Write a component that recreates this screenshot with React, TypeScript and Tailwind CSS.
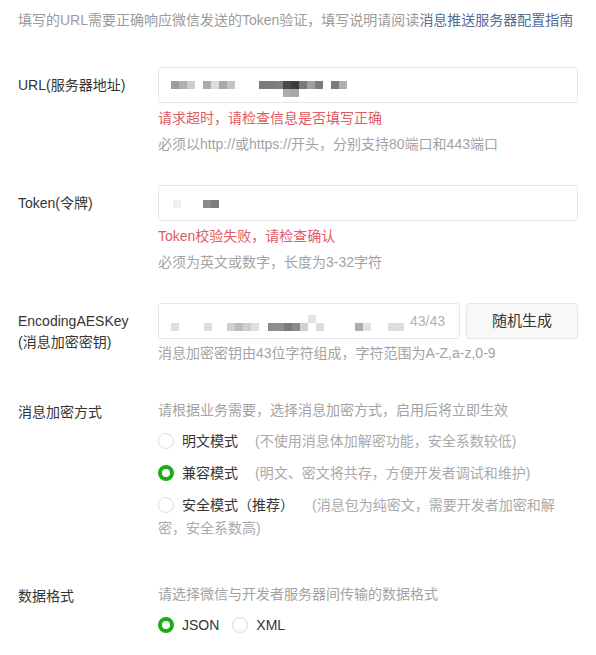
import React from "react";

type Cell = [number, number, string];

const URL_CELLS: Cell[] = [
  [12, 13, "#9c9c9c"], [20, 13, "#b0b0b0"], [28, 13, "#cdcdcd"],
  [44, 13, "#ababab"], [52, 13, "#dcdcdc"], [60, 13, "#a8a8a8"], [68, 13, "#c4c4c4"],
  [100, 13, "#7a7a7a"], [108, 13, "#7c7c7c"], [116, 13, "#808080"], [124, 13, "#4a4a4a"],
  [132, 13, "#3c3c3c"], [140, 13, "#7a7a7a"], [148, 13, "#a0a0a0"], [156, 13, "#7c7c7c"],
  [172, 13, "#7a7a7a"], [180, 13, "#b0b0b0"],
  [124, 21, "#acacac"], [132, 21, "#a8a8a8"],
];

const TOKEN_CELLS: Cell[] = [
  [14, 14, "#f0f0f0"], [44, 14, "#8a8a8a"], [52, 14, "#7c7c7c"],
];

const KEY_CELLS: Cell[] = [
  [12, 19, "#dedede"], [45, 19, "#dedede"],
  [68, 19, "#cfcfcf"], [76, 19, "#bdbdbd"], [84, 19, "#cdcdcd"], [92, 19, "#dedede"],
  [109, 19, "#8c8c8c"], [117, 19, "#8e8e8e"], [125, 19, "#7a7a7a"], [133, 19, "#8a8a8a"],
  [141, 19, "#d0d0d0"], [149, 11, "#e4e4e4"], [157, 19, "#dcdcdc"],
  [196, 19, "#acacac"], [204, 19, "#e2e2e2"], [229, 19, "#dedede"], [237, 19, "#dedede"],
];

function Mosaic({ cells, width }: { cells: Cell[]; width: number }) {
  return (
    <svg width={width} height={34} className="block shrink-0">
      {cells.map(([x, y, c], i) => (
        <rect key={i} x={x} y={y} width={8} height={8} fill={c} />
      ))}
    </svg>
  );
}

function Radio({ checked }: { checked?: boolean }) {
  return checked ? (
    <span className="inline-block align-[-3px] w-4 h-4 rounded-full border-[4px] border-[#1aad19] bg-white mr-2" />
  ) : (
    <span className="inline-block align-[-3px] w-4 h-4 rounded-full border border-[#dcdcdc] bg-white mr-2" />
  );
}

function Label({ children, className = "" }: { children: React.ReactNode; className?: string }) {
  return <div className={`w-[140px] shrink-0 text-[#353535] ${className}`}>{children}</div>;
}

const inputBox = "h-[36px] border border-[#e4e8eb] rounded-[3px] bg-white flex items-center";

export default function App() {
  return (
    <div
      className="w-[596px] h-[655px] overflow-hidden bg-white px-[18px] text-[14px]"
      style={{ fontFamily: '"Liberation Sans", "Noto Sans CJK SC", sans-serif' }}
    >
      <p className="pt-[10px] leading-[20px] text-[#9b9b9b] whitespace-nowrap">
        填写的URL需要正确响应微信发送的Token验证，填写说明请阅读
        <span className="text-[#576b95]">消息推送服务器配置指南</span>
      </p>

      {/* URL */}
      <div className="mt-[37px] flex">
        <Label className="leading-[36px]">URL(服务器地址)</Label>
        <div>
          <div className={`${inputBox} w-[420px]`}>
            <Mosaic cells={URL_CELLS} width={400} />
          </div>
          <p className="mt-[5px] leading-[20px] text-[#e15b66]">请求超时，请检查信息是否填写正确</p>
          <p className="mt-[6px] leading-[20px] text-[#a3a3a3]">必须以http://或https://开头，分别支持80端口和443端口</p>
        </div>
      </div>

      {/* Token */}
      <div className="mt-[31px] flex">
        <Label className="leading-[36px]">Token(令牌)</Label>
        <div>
          <div className={`${inputBox} w-[420px]`}>
            <Mosaic cells={TOKEN_CELLS} width={400} />
          </div>
          <p className="mt-[5px] leading-[20px] text-[#e15b66]">Token校验失败，请检查确认</p>
          <p className="mt-[6px] leading-[20px] text-[#a3a3a3]">必须为英文或数字，长度为3-32字符</p>
        </div>
      </div>

      {/* EncodingAESKey */}
      <div className="mt-[31px] flex">
        <Label className="pt-[8px] leading-[21px]">
          EncodingAESKey
          <br />
          (消息加密密钥)
        </Label>
        <div>
          <div className="flex gap-[6px]">
            <div className={`${inputBox} w-[302px] justify-between pr-[14px]`}>
              <Mosaic cells={KEY_CELLS} width={250} />
              <span className="text-[#b2b2b2]">43/43</span>
            </div>
            <button className="h-[36px] w-[112px] border border-[#e4e8eb] rounded-[3px] bg-[#f8f8f8] text-[15px] text-[#353535]">
              随机生成
            </button>
          </div>
          <p className="mt-[4px] leading-[20px] text-[#a3a3a3]">消息加密密钥由43位字符组成，字符范围为A-Z,a-z,0-9</p>
        </div>
      </div>

      {/* 消息加密方式 */}
      <div className="mt-[37px] flex">
        <Label className="pt-[2px] leading-[20px]">消息加密方式</Label>
        <div className="w-[400px]">
          <p className="leading-[20px] text-[#a3a3a3]">请根据业务需要，选择消息加密方式，启用后将立即生效</p>
          <div className="mt-[10px] leading-[23px]">
            <Radio />
            <span className="text-[#353535]">明文模式</span>
            <span className="ml-[17px] text-[#aaaaaa]">(不使用消息体加解密功能，安全系数较低)</span>
          </div>
          <div className="mt-[9px] leading-[23px]">
            <Radio checked />
            <span className="text-[#353535]">兼容模式</span>
            <span className="ml-[17px] text-[#aaaaaa]">(明文、密文将共存，方便开发者调试和维护)</span>
          </div>
          <div className="mt-[9px] leading-[23px]">
            <Radio />
            <span className="text-[#353535]">安全模式（推荐）</span>
            <span className="ml-[18px] text-[#aaaaaa]">(消息包为纯密文，需要开发者加密和解密，安全系数高)</span>
          </div>
        </div>
      </div>

      {/* 数据格式 */}
      <div className="mt-[44px] flex">
        <Label className="pt-[2px] leading-[20px]">数据格式</Label>
        <div>
          <p className="leading-[20px] text-[#a3a3a3]">请选择微信与开发者服务器间传输的数据格式</p>
          <div className="mt-[10px] leading-[23px]">
            <Radio checked />
            <span className="text-[#353535]">JSON</span>
            <span className="ml-[13px]">
              <Radio />
              <span className="text-[#353535]">XML</span>
            </span>
          </div>
        </div>
      </div>
    </div>
  );
}
